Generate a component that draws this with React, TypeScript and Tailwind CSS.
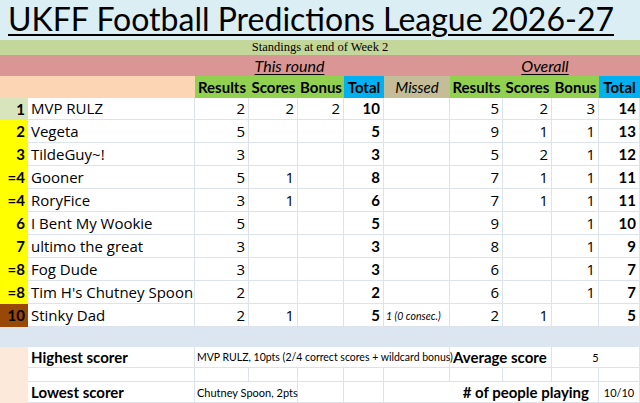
import React from 'react';

// column widths, matching the sheet
const C = {
  rank: 'w-[28px]',
  name: 'w-[167px]',
  res: 'w-[54px]',
  sco: 'w-[49px]',
  bon: 'w-[46px]',
  tot: 'w-[40px]',
  mis: 'w-[66px]',
  ores: 'w-[53px]',
  osco: 'w-[49px]',
  obon: 'w-[47px]',
  otot: 'w-[41px]',
};

interface Player {
  rank: string;
  rankBg: string;
  name: string;
  res?: number;
  sco?: number;
  bon?: number;
  tot: number;
  missed?: string;
  ores?: number;
  osco?: number;
  obon?: number;
  otot: number;
}

const players: Player[] = [
  { rank: '1', rankBg: 'bg-[#d8e4bc]', name: 'MVP RULZ', res: 2, sco: 2, bon: 2, tot: 10, ores: 5, osco: 2, obon: 3, otot: 14 },
  { rank: '2', rankBg: 'bg-[#ffff00]', name: 'Vegeta', res: 5, tot: 5, ores: 9, osco: 1, obon: 1, otot: 13 },
  { rank: '3', rankBg: 'bg-[#ffff00]', name: 'TildeGuy~!', res: 3, tot: 3, ores: 5, osco: 2, obon: 1, otot: 12 },
  { rank: '=4', rankBg: 'bg-[#ffff00]', name: 'Gooner', res: 5, sco: 1, tot: 8, ores: 7, osco: 1, obon: 1, otot: 11 },
  { rank: '=4', rankBg: 'bg-[#ffff00]', name: 'RoryFice', res: 3, sco: 1, tot: 6, ores: 7, osco: 1, obon: 1, otot: 11 },
  { rank: '6', rankBg: 'bg-[#ffff00]', name: 'I Bent My Wookie', res: 5, tot: 5, ores: 9, obon: 1, otot: 10 },
  { rank: '7', rankBg: 'bg-[#ffff00]', name: 'ultimo the great', res: 3, tot: 3, ores: 8, obon: 1, otot: 9 },
  { rank: '=8', rankBg: 'bg-[#ffff00]', name: 'Fog Dude', res: 3, tot: 3, ores: 6, obon: 1, otot: 7 },
  { rank: '=8', rankBg: 'bg-[#ffff00]', name: "Tim H's Chutney Spoon", res: 2, tot: 2, ores: 6, obon: 1, otot: 7 },
  { rank: '10', rankBg: 'bg-[#984807]', name: 'Stinky Dad', res: 2, sco: 1, tot: 5, missed: '1 (0 consec.)', ores: 2, osco: 1, otot: 5 },
];

const grid = 'border-r border-b border-[#dde3ec]';
const reg = "font-['Open_Sans',sans-serif]";

function Num({ w, v, bold }: { w: string; v?: number; bold?: boolean }) {
  return (
    <div className={`${w} ${grid} shrink-0 h-full flex items-center justify-end pr-[3px] ${bold ? 'font-bold' : reg}`}>
      {v ?? ''}
    </div>
  );
}

export default function App() {
  return (
    <div className="w-[640px] h-[403px] overflow-hidden bg-white text-black font-['Lato',sans-serif] text-[15px] leading-none">
      {/* title */}
      <div className="h-[40px] bg-[#daeef3] flex items-start pl-[8px] pt-[3px]">
        <span className="text-[32px] leading-[32px] whitespace-nowrap underline decoration-[2px] underline-offset-[3px]">
          UKFF Football Predictions League 2026-27
        </span>
      </div>

      <div className="h-[15px] bg-[#c4d79b] flex items-center justify-center font-['Liberation_Serif',serif] text-[12.5px]">
        Standings at end of Week 2
      </div>

      <div className="h-[21px] bg-[#da9694] flex items-center italic underline underline-offset-2 text-[16px]">
        <div className="w-[195px] shrink-0" />
        <div className="w-[189px] shrink-0 text-center">This round</div>
        <div className="w-[66px] shrink-0" />
        <div className="w-[190px] shrink-0 text-center">Overall</div>
      </div>

      {/* header */}
      <div className="h-[22px] flex font-bold text-[15px]">
        <div className="w-[195px] shrink-0 bg-[#fcd5b4]" />
        <div className={`${C.res} shrink-0 bg-[#92d050] flex items-center justify-center`}>Results</div>
        <div className={`${C.sco} shrink-0 bg-[#92d050] flex items-center justify-center`}>Scores</div>
        <div className={`${C.bon} shrink-0 bg-[#92d050] flex items-center justify-center`}>Bonus</div>
        <div className={`${C.tot} shrink-0 bg-[#00b0f0] flex items-center justify-center`}>Total</div>
        <div className={`${C.mis} shrink-0 bg-[#c4bd97] flex items-center justify-center font-normal italic`}>Missed</div>
        <div className={`${C.ores} shrink-0 bg-[#92d050] flex items-center justify-center`}>Results</div>
        <div className={`${C.osco} shrink-0 bg-[#92d050] flex items-center justify-center`}>Scores</div>
        <div className={`${C.obon} shrink-0 bg-[#92d050] flex items-center justify-center`}>Bonus</div>
        <div className={`${C.otot} shrink-0 bg-[#00b0f0] flex items-center justify-center`}>Total</div>
      </div>

      {/* standings */}
      {players.map((p, i) => (
        <div key={i} className={`flex ${i === 0 ? 'h-[22px]' : 'h-[23px]'}`}>
          <div className={`${C.rank} ${p.rankBg} shrink-0 h-full flex items-center justify-end pr-[3px] font-bold`}>
            {p.rank}
          </div>
          <div className={`${C.name} ${grid} ${reg} shrink-0 h-full flex items-center pl-[3px] whitespace-nowrap`}>{p.name}</div>
          <Num w={C.res} v={p.res} />
          <Num w={C.sco} v={p.sco} />
          <Num w={C.bon} v={p.bon} />
          <Num w={C.tot} v={p.tot} bold />
          <div className={`${C.mis} ${grid} shrink-0 h-full flex items-center pl-[2px] pt-[2px] italic text-[10.5px] whitespace-nowrap`}>
            {p.missed ?? ''}
          </div>
          <Num w={C.ores} v={p.ores} />
          <Num w={C.osco} v={p.osco} />
          <Num w={C.obon} v={p.obon} />
          <Num w={C.otot} v={p.otot} bold />
        </div>
      ))}

      <div className="h-[20px] bg-[#dce6f1]" />

      {/* summary */}
      <div className="flex">
        <div className={`${C.rank} shrink-0 bg-[#fde9d9]`} />
        <div className="flex-1">
          <div className="h-[21px] flex">
            <div className={`${C.name} ${grid} shrink-0 flex items-center pl-[3px] font-bold`}>Highest scorer</div>
            <div className={`w-[255px] ${grid} shrink-0 flex items-center pl-[2px] text-[10.5px] whitespace-nowrap`}>
              MVP RULZ, 10pts (2/4 correct scores + wildcard bonus)
            </div>
            <div className={`w-[102px] ${grid} shrink-0 flex items-center pl-[3px] font-bold`}>Average score</div>
            <div className={`w-[88px] ${grid} shrink-0 flex items-center justify-center text-[11px]`}>5</div>
          </div>
          <div className="h-[14px] flex">
            <div className={`${C.name} ${grid} shrink-0`} />
            <div className={`${C.res} ${grid} shrink-0`} />
            <div className={`${C.sco} ${grid} shrink-0`} />
            <div className={`${C.bon} ${grid} shrink-0`} />
            <div className={`${C.tot} ${grid} shrink-0`} />
            <div className={`${C.mis} ${grid} shrink-0`} />
            <div className={`${C.ores} ${grid} shrink-0`} />
            <div className={`${C.osco} ${grid} shrink-0`} />
            <div className={`${C.obon} ${grid} shrink-0`} />
            <div className={`${C.otot} ${grid} shrink-0`} />
          </div>
          <div className="h-[21px] flex">
            <div className={`${C.name} ${grid} shrink-0 flex items-center pl-[3px] font-bold`}>Lowest scorer</div>
            <div className={`w-[103px] ${grid} shrink-0 flex items-center pl-[2px] text-[11px] whitespace-nowrap`}>
              Chutney Spoon, 2pts
            </div>
            <div className={`${C.bon} ${grid} shrink-0`} />
            <div className={`${C.tot} ${grid} shrink-0`} />
            <div className={`w-[215px] ${grid} shrink-0 flex items-center justify-end pr-[9px] font-bold whitespace-nowrap`}>
              # of people playing
            </div>
            <div className={`${C.otot} ${grid} shrink-0 flex items-center justify-center text-[11px]`}>10/10</div>
          </div>
        </div>
      </div>
    </div>
  );
}
